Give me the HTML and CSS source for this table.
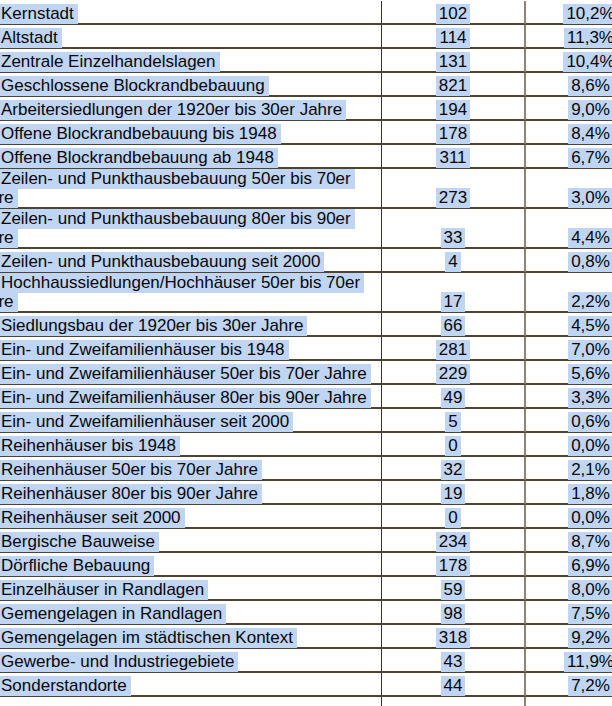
FILE: index.html
```html
<!DOCTYPE html>
<html lang="de">
<head>
<meta charset="utf-8">
<title>Siedlungstypen</title>
<link rel="stylesheet" href="styles.css">
</head>
<body>
<div class="sheet">
<table class="grid">
<colgroup><col class="c-name"><col class="c-num"><col class="c-pct"></colgroup>
<tbody>
<tr><td class="name"><span class="sel">Kernstadt</span></td><td class="num"><span class="sel">102</span></td><td class="pct"><span class="sel">10,2%</span></td></tr>
<tr><td class="name"><span class="sel">Altstadt</span></td><td class="num"><span class="sel">114</span></td><td class="pct"><span class="sel">11,3%</span></td></tr>
<tr><td class="name"><span class="sel">Zentrale Einzelhandelslagen</span></td><td class="num"><span class="sel">131</span></td><td class="pct"><span class="sel">10,4%</span></td></tr>
<tr><td class="name"><span class="sel">Geschlossene Blockrandbebauung</span></td><td class="num"><span class="sel">821</span></td><td class="pct"><span class="sel">8,6%</span></td></tr>
<tr><td class="name"><span class="sel">Arbeitersiedlungen der 1920er bis 30er Jahre</span></td><td class="num"><span class="sel">194</span></td><td class="pct"><span class="sel">9,0%</span></td></tr>
<tr><td class="name"><span class="sel">Offene Blockrandbebauung bis 1948</span></td><td class="num"><span class="sel">178</span></td><td class="pct"><span class="sel">8,4%</span></td></tr>
<tr><td class="name"><span class="sel">Offene Blockrandbebauung ab 1948</span></td><td class="num"><span class="sel">311</span></td><td class="pct"><span class="sel">6,7%</span></td></tr>
<tr class="tall"><td class="name"><span class="sel">Zeilen- und Punkthausbebauung 50er bis 70er</span><br><span class="sel tail">Jahre</span></td><td class="num"><span class="sel">273</span></td><td class="pct"><span class="sel">3,0%</span></td></tr>
<tr class="tall"><td class="name"><span class="sel">Zeilen- und Punkthausbebauung 80er bis 90er</span><br><span class="sel tail">Jahre</span></td><td class="num"><span class="sel">33</span></td><td class="pct"><span class="sel">4,4%</span></td></tr>
<tr><td class="name"><span class="sel">Zeilen- und Punkthausbebauung seit 2000</span></td><td class="num"><span class="sel">4</span></td><td class="pct"><span class="sel">0,8%</span></td></tr>
<tr class="tall"><td class="name"><span class="sel">Hochhaussiedlungen/Hochhäuser 50er bis 70er</span><br><span class="sel tail">Jahre</span></td><td class="num"><span class="sel">17</span></td><td class="pct"><span class="sel">2,2%</span></td></tr>
<tr><td class="name"><span class="sel">Siedlungsbau der 1920er bis 30er Jahre</span></td><td class="num"><span class="sel">66</span></td><td class="pct"><span class="sel">4,5%</span></td></tr>
<tr><td class="name"><span class="sel">Ein- und Zweifamilienhäuser bis 1948</span></td><td class="num"><span class="sel">281</span></td><td class="pct"><span class="sel">7,0%</span></td></tr>
<tr><td class="name"><span class="sel">Ein- und Zweifamilienhäuser 50er bis 70er Jahre</span></td><td class="num"><span class="sel">229</span></td><td class="pct"><span class="sel">5,6%</span></td></tr>
<tr><td class="name"><span class="sel">Ein- und Zweifamilienhäuser 80er bis 90er Jahre</span></td><td class="num"><span class="sel">49</span></td><td class="pct"><span class="sel">3,3%</span></td></tr>
<tr><td class="name"><span class="sel">Ein- und Zweifamilienhäuser seit 2000</span></td><td class="num"><span class="sel">5</span></td><td class="pct"><span class="sel">0,6%</span></td></tr>
<tr><td class="name"><span class="sel">Reihenhäuser bis 1948</span></td><td class="num"><span class="sel">0</span></td><td class="pct"><span class="sel">0,0%</span></td></tr>
<tr><td class="name"><span class="sel">Reihenhäuser 50er bis 70er Jahre</span></td><td class="num"><span class="sel">32</span></td><td class="pct"><span class="sel">2,1%</span></td></tr>
<tr><td class="name"><span class="sel">Reihenhäuser 80er bis 90er Jahre</span></td><td class="num"><span class="sel">19</span></td><td class="pct"><span class="sel">1,8%</span></td></tr>
<tr><td class="name"><span class="sel">Reihenhäuser seit 2000</span></td><td class="num"><span class="sel">0</span></td><td class="pct"><span class="sel">0,0%</span></td></tr>
<tr><td class="name"><span class="sel">Bergische Bauweise</span></td><td class="num"><span class="sel">234</span></td><td class="pct"><span class="sel">8,7%</span></td></tr>
<tr><td class="name"><span class="sel">Dörfliche Bebauung</span></td><td class="num"><span class="sel">178</span></td><td class="pct"><span class="sel">6,9%</span></td></tr>
<tr><td class="name"><span class="sel">Einzelhäuser in Randlagen</span></td><td class="num"><span class="sel">59</span></td><td class="pct"><span class="sel">8,0%</span></td></tr>
<tr><td class="name"><span class="sel">Gemengelagen in Randlagen</span></td><td class="num"><span class="sel">98</span></td><td class="pct"><span class="sel">7,5%</span></td></tr>
<tr><td class="name"><span class="sel">Gemengelagen im städtischen Kontext</span></td><td class="num"><span class="sel">318</span></td><td class="pct"><span class="sel">9,2%</span></td></tr>
<tr><td class="name"><span class="sel">Gewerbe- und Industriegebiete</span></td><td class="num"><span class="sel">43</span></td><td class="pct"><span class="sel">11,9%</span></td></tr>
<tr><td class="name"><span class="sel">Sonderstandorte</span></td><td class="num"><span class="sel">44</span></td><td class="pct"><span class="sel">7,2%</span></td></tr>
<tr class="empty"><td class="name"></td><td class="num"></td><td class="pct"></td></tr>
</tbody>
</table>
</div>
</body>
</html>
```

FILE: styles.css
```css
html, body {
  margin: 0;
  padding: 0;
  background: #ffffff;
  overflow: hidden;
}

.sheet {
  width: 612px;
  height: 706px;
  overflow: hidden;
  padding-top: 1px;
  box-sizing: border-box;
}

.grid {
  border-collapse: separate;
  border-spacing: 0;
  table-layout: fixed;
  width: 655px;
  font-family: "Liberation Sans", Arial, sans-serif;
  font-size: 17px;
  line-height: 19px;
  color: #080808;
}

.c-name { width: 382px; }
.c-num { width: 144px; }
.c-pct { width: 129px; }

.grid td {
  box-sizing: border-box;
  height: 24px;
  padding: 0;
  vertical-align: bottom;
  border-bottom: 2px solid #4b4431;
  white-space: nowrap;
}

.grid tr.tall td {
  height: 40px;
}

.grid tr.empty td {
  height: 24px;
}

.name {
  text-align: left;
  border-right: 1px solid #3a3122;
}

.num {
  text-align: center;
  border-right: 2px solid #8e8274;
}

.pct {
  text-align: center;
}

.sel {
  background: #c0d4f3;
  padding: 0 3px 1px 3px;
}

.name .sel {
  padding: 0 4px 1px 1px;
}

.name .tail {
  margin-left: -30px;
}
```
